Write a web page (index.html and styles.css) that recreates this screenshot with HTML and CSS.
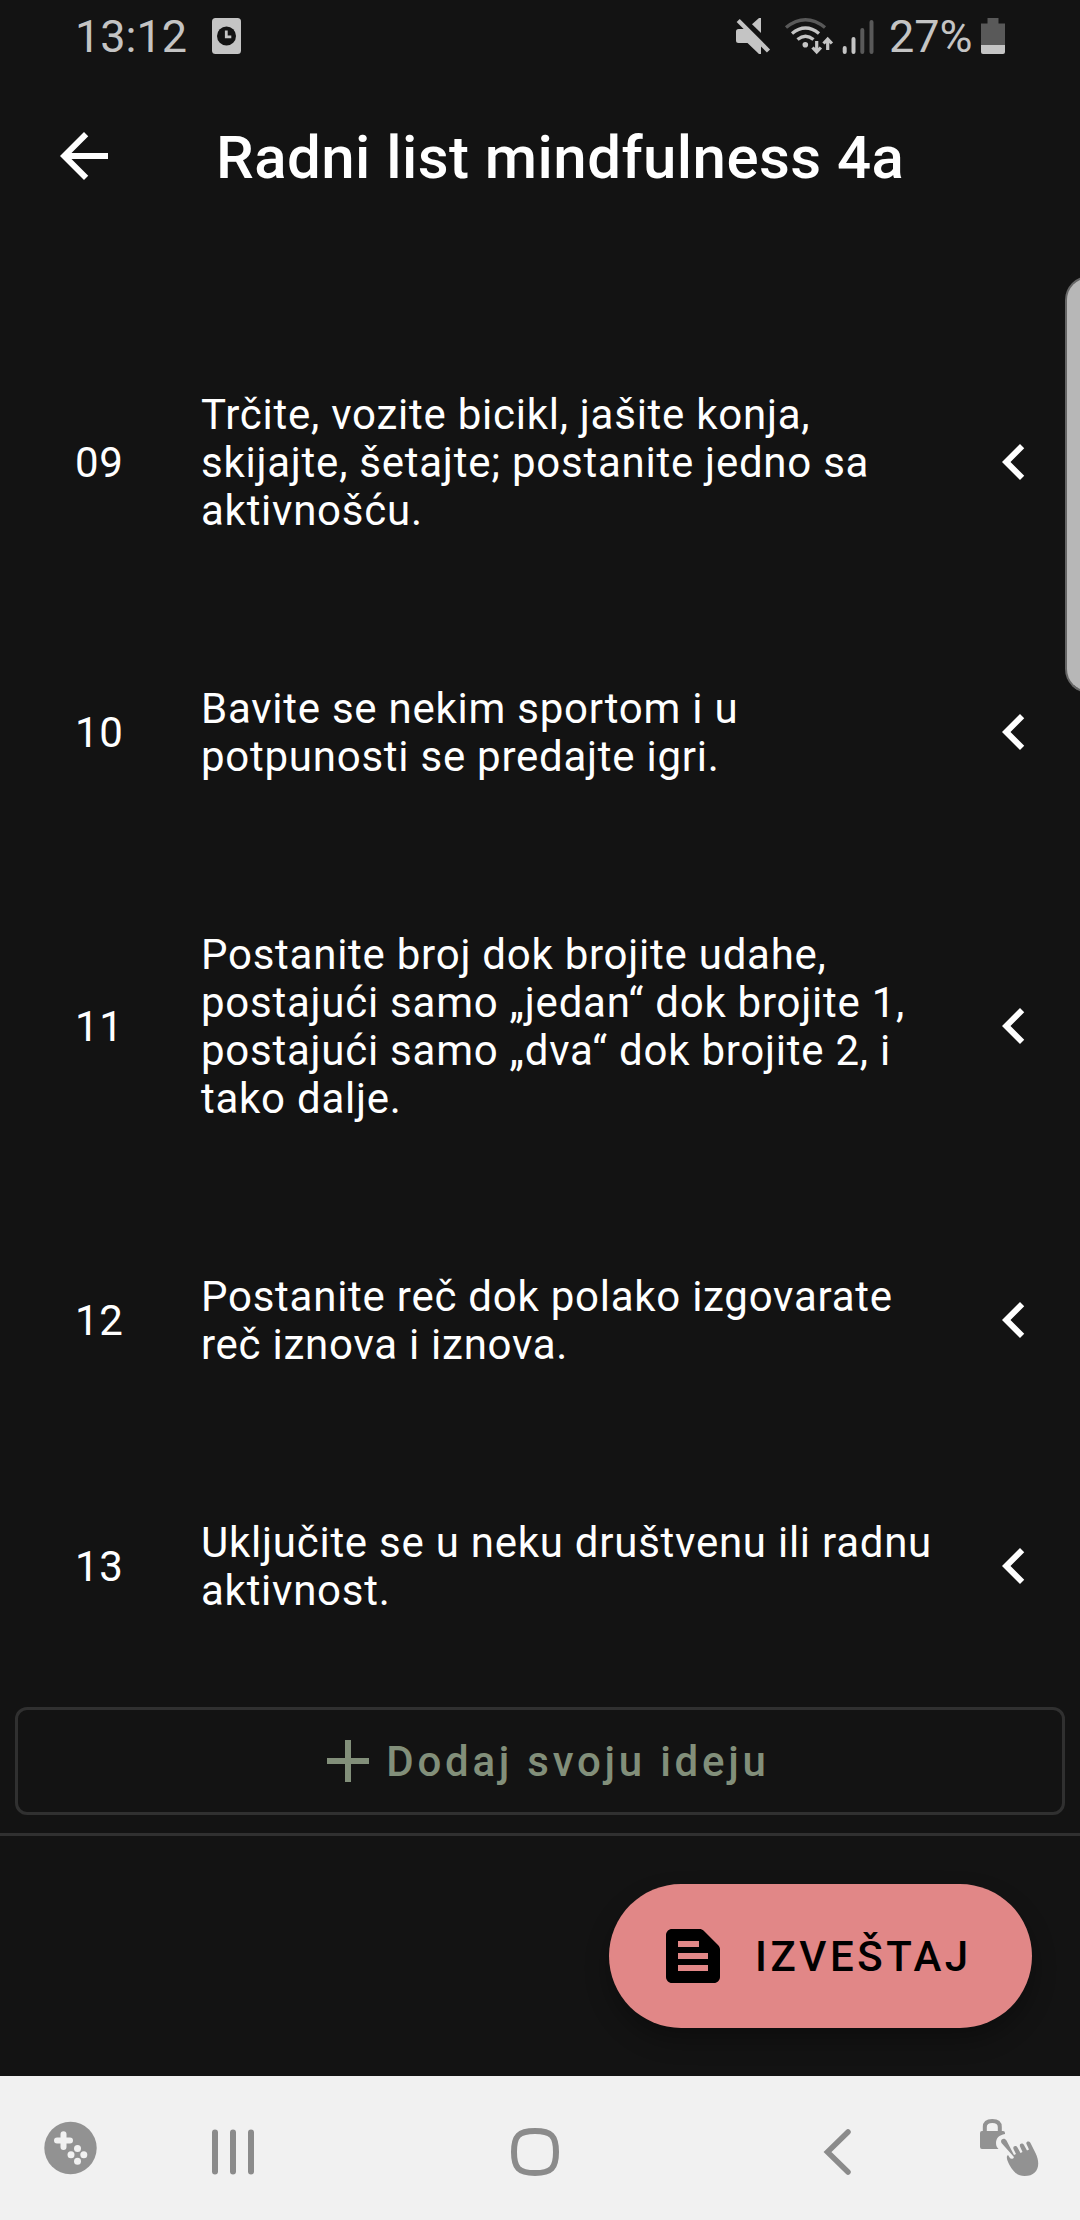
FILE: index.html
```html
<!DOCTYPE html>
<html lang="sr">
<head>
<meta charset="utf-8">
<title>Radni list mindfulness 4a</title>
<link rel="stylesheet" href="styles.css">
</head>
<body>
<div class="screen">
  <div class="status">
    <span class="status-text">13:12</span>
    <svg class="alarm" width="29" height="36" viewBox="0 0 29 36"><rect width="29" height="36" rx="3.5" fill="#c4c4c4"/><circle cx="14.5" cy="18" r="9.5" fill="#131313"/><path d="M14.3 12.5v6.3h5" fill="none" stroke="#c4c4c4" stroke-width="2.8"/></svg>
    <svg class="indicators" width="142" height="38" viewBox="736 17 142 38">
      <g fill="#c4c4c4">
        <path d="M738.5 29h8.5l14 14v11h-2L747.500 43h-9q-2.500 0-2.500-2.500V31.500q0-2.500 2.500-2.500z"/>
        <path d="M761 18v15l-9-8.700 7-6.300z"/>
      </g>
      <path d="M738.200 20.500L768.500 51" stroke="#c4c4c4" stroke-width="4.400"/>
      <g fill="none" stroke-width="3.400">
        <path d="M786 27.500q19.500-15.500 39 0" stroke="#595959"/>
        <path d="M792 33.500q13.500-11 27 0M797.500 39.500q8-6.500 16 0" stroke="#c4c4c4"/>
      </g>
      <circle cx="805.300" cy="44.700" r="2.800" fill="#c4c4c4"/>
      <path d="M816.700 41v9M812.500 47.500l4.200 4.500 4.200-4.500M827.700 50v-10M823.500 43.500l4.200-4.500 4.200 4.500" fill="none" stroke="#c4c4c4" stroke-width="3.200"/>
      <g stroke-width="4" stroke-linecap="round">
        <path d="M844.700 48v4M853.500 39v13" stroke="#c4c4c4"/>
        <path d="M862.300 30v22M871.500 22v30" stroke="#595959"/>
      </g>
    </svg>
    <span class="status-text percent">27%</span>
    <svg class="battery" width="24" height="36" viewBox="0 0 24 36"><path d="M0 27V5.500h6.500V0h11v5.500H24V27z" fill="#595959"/><path d="M0 27h24v7q0 2-2 2H2q-2 0-2-2z" fill="#c4c4c4"/></svg>
  </div>

  <header class="appbar">
    <svg class="icon" viewBox="0 0 24 24"><path fill="#fff" d="M20 11H7.830l5.590-5.590L12 4l-8 8 8 8 1.410-1.410L7.830 13H20v-2z"/></svg>
    <h1 class="title">Radni list mindfulness 4a</h1>
  </header>

  <main class="list">
    <div class="item">
      <span class="num">09</span>
      <p class="text">Trčite, vozite bicikl, jašite konja,<br>skijajte, šetajte; postanite jedno sa<br>aktivnošću.</p>
      <svg class="icon" viewBox="0 0 24 24"><path fill="#fff" d="M15.410 7.410L14 6l-6 6 6 6 1.410-1.410L10.830 12z"/></svg>
    </div>
    <div class="item">
      <span class="num">10</span>
      <p class="text">Bavite se nekim sportom i u<br>potpunosti se predajte igri.</p>
      <svg class="icon" viewBox="0 0 24 24"><path fill="#fff" d="M15.410 7.410L14 6l-6 6 6 6 1.410-1.410L10.830 12z"/></svg>
    </div>
    <div class="item">
      <span class="num">11</span>
      <p class="text">Postanite broj dok brojite udahe,<br>postajući samo „jedan“ dok brojite 1,<br>postajući samo „dva“ dok brojite 2, i<br>tako dalje.</p>
      <svg class="icon" viewBox="0 0 24 24"><path fill="#fff" d="M15.410 7.410L14 6l-6 6 6 6 1.410-1.410L10.830 12z"/></svg>
    </div>
    <div class="item">
      <span class="num">12</span>
      <p class="text">Postanite reč dok polako izgovarate<br>reč iznova i iznova.</p>
      <svg class="icon" viewBox="0 0 24 24"><path fill="#fff" d="M15.410 7.410L14 6l-6 6 6 6 1.410-1.410L10.830 12z"/></svg>
    </div>
    <div class="item">
      <span class="num">13</span>
      <p class="text">Uključite se u neku društvenu ili radnu<br>aktivnost.</p>
      <svg class="icon" viewBox="0 0 24 24"><path fill="#fff" d="M15.410 7.410L14 6l-6 6 6 6 1.410-1.410L10.830 12z"/></svg>
    </div>
    <div class="scrollbar"></div>
  </main>

  <button class="add">
    <svg class="icon" viewBox="0 0 24 24"><path fill="#828f7a" d="M19 13h-6v6h-2v-6H5v-2h6V5h2v6h6z"/></svg>
    <span class="add-label">Dodaj svoju ideju</span>
  </button>

  <footer class="footer">
    <button class="fab">
      <svg class="icon" viewBox="0 0 24 24"><path d="M20.410 8.410l-4.830-4.830c-.37-.37-.88-.58-1.410-.58H5c-1.100 0-2 .9-2 2v14c0 1.100.9 2 2 2h14c1.100 0 2-.9 2-2V9.830c0-.53-.21-1.040-.59-1.420zM7 7h7v2H7V7zm10 10H7v-2h10v2zm0-4H7v-2h10v2z"/></svg>
      <span class="fab-label">IZVEŠTAJ</span>
    </button>
  </footer>

  <nav class="nav">
    <svg width="1080" height="144" viewBox="0 2076 1080 144">
      <circle cx="70.500" cy="2148" r="26.200" fill="#929292"/>
      <path d="M63.500 2134.200v12.800M57 2140.600h13" stroke="#f1f1f1" stroke-width="6" stroke-linecap="round"/>
      <g fill="#f1f1f1"><circle cx="77.500" cy="2148.500" r="3.500"/><circle cx="71" cy="2154.800" r="3.500"/><circle cx="83.800" cy="2154.800" r="3.500"/><circle cx="77.500" cy="2161.200" r="3.500"/></g>
      <path d="M215 2132.500v39M233 2132.500v39M251 2132.500v39" stroke="#8b8b8b" stroke-width="6" stroke-linecap="round"/>
      <path d="M535 2131c16.500 0 21 5 21 21s-4.500 21-21 21-21-5-21-21 4.500-21 21-21z" fill="none" stroke="#8b8b8b" stroke-width="6"/>
      <path d="M848 2132l-20.500 20 20.500 20" fill="none" stroke="#8b8b8b" stroke-width="5.500" stroke-linecap="round"/>
      <g fill="#929292">
        <path d="M984.800 2132v-5q0-6 7.500-6t7.500 6v5" fill="none" stroke="#929292" stroke-width="4"/>
        <path d="M982 2131h21q2 0 2 2v1c-6 1-9 4-9 9 0 3 1 4.500 2.500 6H982q-2 0-2-2v-14q0-2 2-2z"/>
        <path d="M1001.500 2143c-2-4 3-6 5-2.500l7.500 14.500 2-1-2.500-5c-1-3 2.500-4 4-1.500l3 5.500 2-1-2.500-5.500c-1-3 2.500-4 4-1.500l3 5.500 2-1-2.500-5.500c-1-2.500 2.500-3.500 4-1l5 10c6 12 2 23-11 23-7 0-11-4-15-11-2-4-4-8-1.500-10 1.500 2 2 4.500 5 3.500 1-.5 1-1 .5-2z"/>
      </g>
    </svg>
  </nav>
</div>
</body>
</html>
```
FILE: styles.css
```css
* { box-sizing: border-box; }
body { margin: 0; background: #131313; }
.screen {
  width: 1080px;
  height: 2220px;
  display: flex;
  flex-direction: column;
  overflow: hidden;
  background: #131313;
  color: #fff;
  font-family: Roboto, sans-serif;
}
svg { display: block; flex: none; }
.icon { width: 72px; height: 72px; }

.status {
  height: 72px;
  flex: none;
  display: flex;
  align-items: center;
  padding: 0 75px;
  color: #c4c4c4;
}
.status-text { font-size: 45px; line-height: 54px; width: 137px; padding-top: 2px; }
.percent { width: 92px; margin-left: 11px; }
.indicators { margin-left: auto; }

.appbar {
  height: 168px;
  flex: none;
  display: flex;
  align-items: center;
  padding: 0 48px;
  gap: 96px;
}
.title {
  margin: 0;
  padding-top: 4px;
  font-size: 60px;
  line-height: 72px;
  font-weight: 500;
  letter-spacing: 0.45px;
  white-space: nowrap;
}

.list {
  position: relative;
  height: 1449px;
  flex: none;
  padding-top: 75px;
  font-size: 42px;
  line-height: 48px;
  letter-spacing: 0.75px;
}
.item {
  display: flex;
  align-items: center;
  padding: 75px 30px 75px 75px;
}
.num { width: 126px; padding-top: 2px; }
.text { margin: 0; padding-top: 2px; margin-bottom: -2px; flex: 1; white-space: nowrap; }
.text { padding-top: 1px; margin-bottom: -1px; }
.scrollbar {
  position: absolute;
  top: 36px;
  right: -9px;
  width: 24px;
  height: 417px;
  background: #b7b7b7;
  border: 2px solid #666;
  border-radius: 24px 0 0 24px;
}

button { font: inherit; color: inherit; padding: 0; border: 0; background: none; }
.add {
  margin: 18px 15px;
  height: 108px;
  flex: none;
  display: flex;
  align-items: center;
  justify-content: center;
  border: 3px solid #303030;
  border-radius: 12px;
}
.add-label {
  margin: 1px -2px 0 2px;
  font-size: 42px;
  line-height: 48px;
  font-weight: 500;
  letter-spacing: 3.75px;
  color: #828f7a;
}

.footer {
  height: 243px;
  flex: none;
  border-top: 3px solid #303030;
  padding: 48px;
  display: flex;
  justify-content: flex-end;
  align-items: flex-start;
}
.fab {
  width: 423px;
  height: 144px;
  display: flex;
  align-items: center;
  gap: 26px;
  padding-left: 48px;
  background: #e18787;
  border-radius: 72px;
  color: #000;
  box-shadow: 0 12px 24px rgba(0, 0, 0, 0.3);
}
.fab-label {
  padding-top: 1px;
  font-size: 42px;
  line-height: 48px;
  font-weight: 500;
  letter-spacing: 3.55px;
}
.nav { height: 144px; flex: none; background: #f1f1f1; }
```
